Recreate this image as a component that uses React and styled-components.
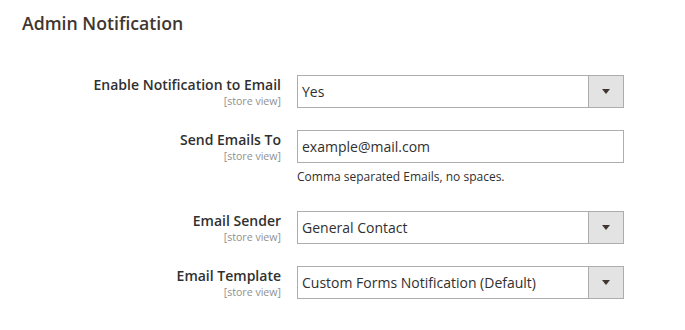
import styled, { createGlobalStyle } from "styled-components";

const GlobalStyle = createGlobalStyle`
	body {
		margin: 0;
		background: #ffffff;
		font-family: "Open Sans", "Liberation Sans", sans-serif;
		color: #303030;
	}
`;

const fields = [
	{ label: "Enable Notification to Email", type: "select", value: "Yes" },
	{
		label: "Send Emails To",
		type: "text",
		value: "example@mail.com",
		note: "Comma separated Emails, no spaces.",
	},
	{ label: "Email Sender", type: "select", value: "General Contact" },
	{ label: "Email Template", type: "select", value: "Custom Forms Notification (Default)" },
];

export default function App() {
	return (
		<>
			<GlobalStyle />
			<Section>
				<Title>Admin Notification</Title>
				<Form>
					{fields.map((field) => (
						<Row key={field.label}>
							<Label>
								<span>{field.label}</span>
								<Scope>[store view]</Scope>
							</Label>
							<Control>
								{field.type === "select" ? (
									<Select>
										<Value>{field.value}</Value>
										<ArrowButton>
											<Arrow />
										</ArrowButton>
									</Select>
								) : (
									<TextInput type="text" defaultValue={field.value} readOnly />
								)}
								{field.note && <Note>{field.note}</Note>}
							</Control>
						</Row>
					))}
				</Form>
			</Section>
		</>
	);
}

const Section = styled.div`
	padding: 12px 22px;
`;

const Title = styled.h2`
	margin: 0;
	font-size: 17.7px;
	line-height: 22px;
	font-weight: 600;
	color: #41362f;
`;

const Form = styled.div`
	display: flex;
	flex-direction: column;
	gap: 22px;
	margin-top: 41px;
`;

const Row = styled.div`
	display: grid;
	grid-template-columns: 259px 327px;
	column-gap: 16px;
`;

const Label = styled.div`
	display: flex;
	flex-direction: column;
	align-items: flex-end;
	font-size: 14px;
	line-height: 19px;
	font-weight: 600;
	color: #303030;
	text-align: right;
`;

const Scope = styled.span`
	font-size: 10.6px;
	line-height: 14px;
	font-weight: 400;
	color: #919191;
`;

const Control = styled.div`
	display: flex;
	flex-direction: column;
`;

const Select = styled.div`
	display: flex;
	height: 33px;
	box-sizing: border-box;
	border: 1px solid #adadad;
	background: #ffffff;
`;

const Value = styled.div`
	flex: 1;
	display: flex;
	align-items: center;
	padding-left: 4px;
	font-size: 14px;
	color: #303030;
`;

const ArrowButton = styled.div`
	width: 34px;
	display: flex;
	align-items: center;
	justify-content: center;
	background: #e3e3e3;
	border-left: 1px solid #adadad;
`;

const Arrow = styled.span`
	width: 0;
	height: 0;
	border-left: 4px solid transparent;
	border-right: 4px solid transparent;
	border-top: 5px solid #41362f;
`;

const TextInput = styled.input`
	height: 33px;
	box-sizing: border-box;
	border: 1px solid #adadad;
	padding: 0 4px;
	margin: 0;
	font-family: "Open Sans", "Liberation Sans", sans-serif;
	font-size: 14px;
	color: #303030;
	outline: none;
`;

const Note = styled.div`
	margin-top: 6px;
	margin-bottom: 4px;
	font-size: 12px;
	line-height: 16px;
	color: #303030;
`;
